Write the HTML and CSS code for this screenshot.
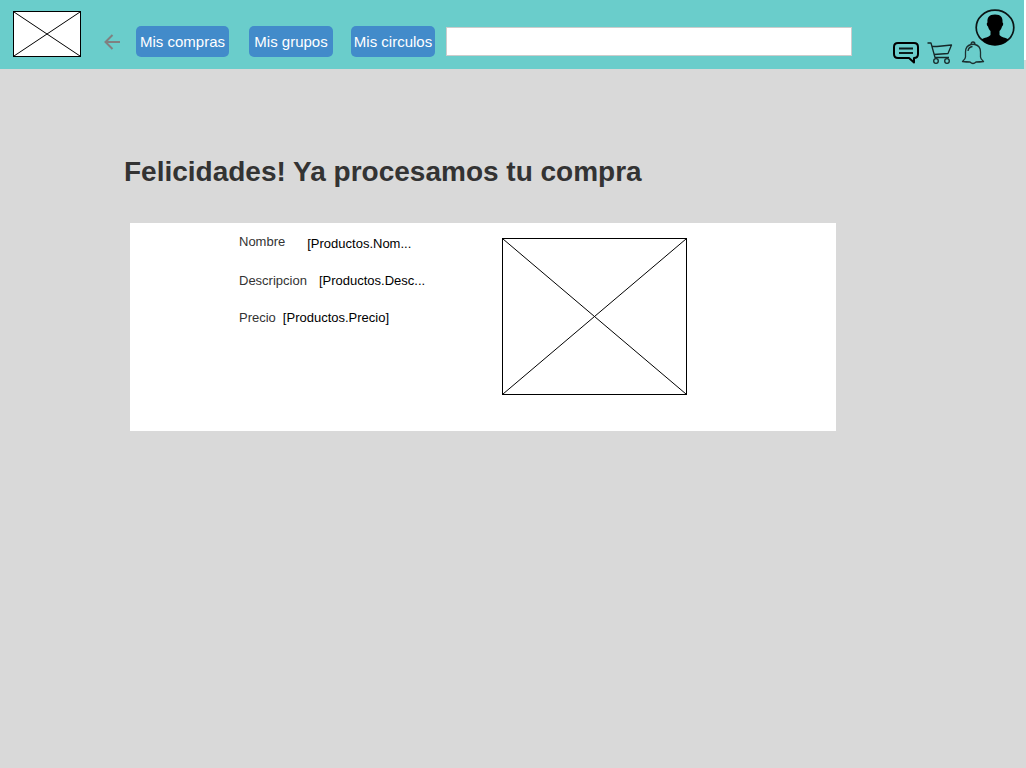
FILE: index.html
```html
<!DOCTYPE html>
<html lang="es">
<head>
<meta charset="utf-8">
<title>Compra procesada</title>
<link rel="stylesheet" href="styles.css">
</head>
<body>
<header class="topbar">
  <a class="logo" href="#" aria-label="Inicio">
    <svg class="placeholder" aria-hidden="true"><rect width="100%" height="100%"/><line x1="0" y1="0" x2="100%" y2="100%"/><line x1="100%" y1="0" x2="0" y2="100%"/></svg>
  </a>
  <a class="back" href="#" aria-label="Volver">
    <svg viewBox="0 0 16 16" width="16" height="16"><path d="M16 8H2M8.500 1L1.500 8l7 7" fill="none" stroke="#808080" stroke-width="2"/></svg>
  </a>
  <nav class="menu">
    <button class="btn btn-wide" type="button">Mis compras</button>
    <button class="btn" type="button">Mis grupos</button>
    <button class="btn" type="button">Mis circulos</button>
  </nav>
  <input class="search" type="text" aria-label="Buscar">
  <div class="actions">
    <button class="icon" type="button" aria-label="Mensajes">
      <svg width="26" height="24" viewBox="0 0 26 24"><path d="M5 2h16q4 0 4 4v7q0 4-4 4v4.500L16 17H5q-4 0-4-4V6q0-4 4-4z" fill="none" stroke="#000" stroke-width="2" stroke-linejoin="round"/><path d="M6 7.500h14M6 12h14" stroke="#0b1c1c" stroke-width="1.800"/></svg>
    </button>
    <button class="icon" type="button" aria-label="Carrito">
      <svg width="26" height="24" viewBox="0 0 26 24" fill="none" stroke="#152828" stroke-width="1.300" stroke-linejoin="round"><path d="M.5 2H4l4 14.500h14"/><path d="M5 5.500h5L24.500 4l-3.500 8.500-14 1"/><circle cx="9" cy="20" r="2.300"/><circle cx="20" cy="20" r="2.300"/></svg>
    </button>
    <button class="icon" type="button" aria-label="Notificaciones">
      <svg width="24" height="24" viewBox="0 0 24 24" fill="none" stroke="#1c3030" stroke-width="1.300" stroke-linejoin="round"><path d="M10 3.500q0-2.500 2-2.500t2 2.500c4 1 5.500 4 5.500 7.500v5q0 2 3 4.500-4 .5-7.500.5-3 3-6 0-3.500 0-7.500-.5 3-2.500 3-4.500v-5C4.500 7.500 6 4.500 10 3.500q2-.5 4 0"/><path d="M7 10q.5-4 4.500-4.500"/></svg>
    </button>
  </div>
  <button class="avatar" type="button" aria-label="Perfil">
    <svg width="40" height="37" viewBox="0 0 40 37"><ellipse cx="20" cy="18.500" rx="18.800" ry="17.300" fill="none" stroke="#0b1414" stroke-width="1.700"/><path d="M20 5.500c6 0 8 3 7.500 8 1 0 1 3-.5 4-.5 2-1.500 3.500-2.500 4.500v4c2 2.500 6 2.500 9 4.500-3.500 4-8 5.800-13.500 5.800S10 34.500 6.500 30.500c3-2 7-2 9-4.500v-4c-1-1-2-2.500-2.500-4.500-1.500-1-1.500-4-.5-4-.5-5 1.500-8 7.500-8z"/></svg>
  </button>
</header>
<main class="content">
  <h1 class="title">Felicidades! Ya procesamos tu compra</h1>
  <section class="card">
    <dl class="details">
      <div class="row row-name"><dt>Nombre</dt><dd>[Productos.Nom...</dd></div>
      <div class="row row-desc"><dt>Descripcion</dt><dd>[Productos.Desc...</dd></div>
      <div class="row"><dt>Precio</dt><dd>[Productos.Precio]</dd></div>
    </dl>
    <svg class="placeholder photo" role="img" aria-label="Producto"><rect width="100%" height="100%"/><line x1="0" y1="0" x2="100%" y2="100%"/><line x1="100%" y1="0" x2="0" y2="100%"/></svg>
  </section>
</main>
</body>
</html>
```

FILE: styles.css
```css
* {
  box-sizing: border-box;
}

body {
  margin: 0;
  min-height: 100vh;
  background: #d9d9d9;
  color: #333;
  font: 13px/16px "Liberation Sans", Arial, sans-serif;
}

.topbar {
  position: relative;
  display: flex;
  align-items: flex-end;
  margin-right: 2px;
  padding: 11px 39px 12px 13px;
  background: #6acdcb;
}

.topbar::after {
  content: "";
  position: absolute;
  top: 0;
  right: -2px;
  width: 2px;
  height: 60px;
  background: #fff;
}

.logo {
  width: 68px;
  height: 46px;
  flex: none;
}

.placeholder {
  display: block;
  width: 100%;
  height: 100%;
  background: #fff;
  border: 1px solid #000;
}

.placeholder rect {
  fill: #fff;
}

.placeholder line {
  stroke: #000;
  stroke-width: 1;
}

.back {
  display: flex;
  margin: 0 16px 7px 23px;
}

.menu {
  display: flex;
}

.btn {
  width: 84px;
  height: 31px;
  margin-right: 18px;
  padding: 0;
  border: 0;
  border-radius: 5px;
  background: #428bca;
  color: #fff;
  font: 15px/18px "Liberation Sans", Arial, sans-serif;
  white-space: nowrap;
}

.btn-wide {
  width: 93px;
  margin-right: 20px;
}

.btn:last-child {
  margin-right: 11px;
}

.search {
  flex: 1;
  min-width: 0;
  height: 29px;
  margin-bottom: 1px;
  padding: 0 8px;
  border: 1px solid #ccc;
  background: #fff;
  font: inherit;
}

.actions {
  display: flex;
  gap: 8px;
  margin: 0 0 -8px 41px;
}

.icon,
.avatar {
  display: block;
  padding: 0;
  border: 0;
  background: none;
}

.icon svg,
.avatar svg {
  display: block;
}

.avatar {
  position: absolute;
  top: 9px;
  right: 9px;
}

.content {
  padding: 87px 190px 40px 124px;
}

.title {
  margin: 0;
  font-size: 28px;
  line-height: 32px;
}

.card {
  display: flex;
  align-items: flex-start;
  min-height: 208px;
  margin: 35px 0 0 6px;
  padding: 15px 16px 36px 109px;
  background: #fff;
}

.details {
  width: 263px;
  margin: -4px 0 0;
}

.row {
  display: flex;
  gap: 7px;
  margin-bottom: 21px;
}

.row-name {
  gap: 22px;
}

.row-name dd {
  padding-top: 2px;
}

.row-desc {
  gap: 12px;
}

.row dd {
  margin: 0;
  color: #000;
}

.photo {
  width: 185px;
  height: 157px;
}
```
